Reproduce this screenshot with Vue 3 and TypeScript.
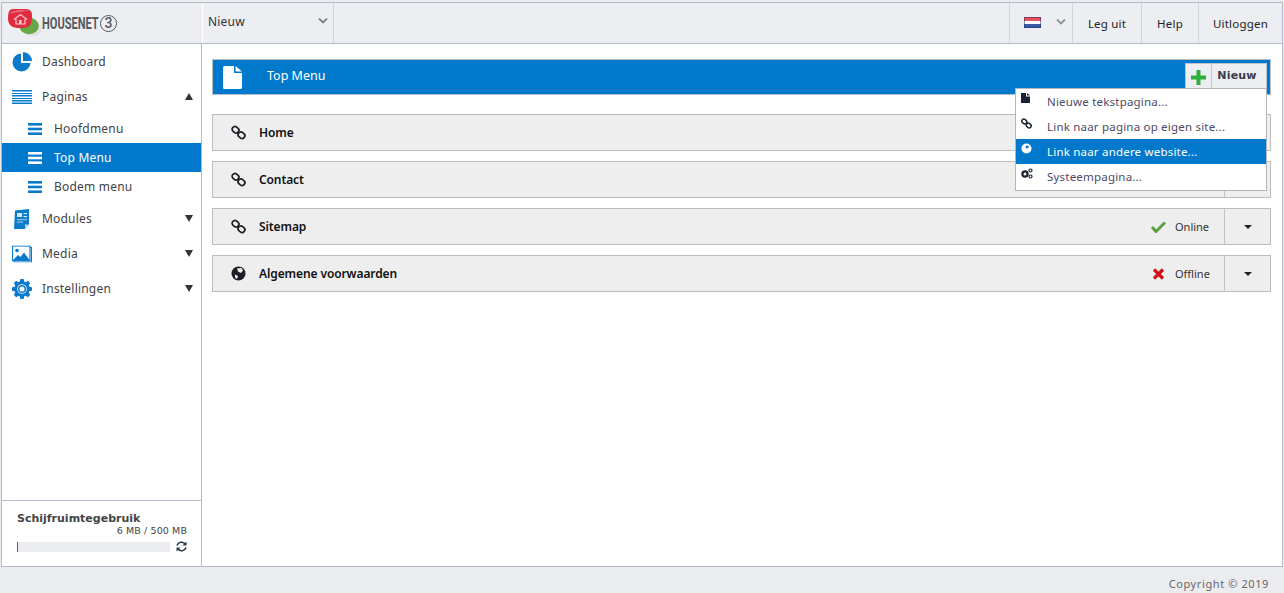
<script setup lang="ts">
interface Row { name: string; icon: 'link' | 'globe'; status: 'Online' | 'Offline'; covered: boolean }
// The first two rows' status lies under the open "Nieuw" menu.
const rows: Row[] = [
  { name: 'Home', icon: 'link', status: 'Online', covered: true },
  { name: 'Contact', icon: 'link', status: 'Online', covered: true },
  { name: 'Sitemap', icon: 'link', status: 'Online', covered: false },
  { name: 'Algemene voorwaarden', icon: 'globe', status: 'Offline', covered: false },
]
const subs = [
  { name: 'Hoofdmenu', active: false },
  { name: 'Top Menu', active: true },
  { name: 'Bodem menu', active: false },
]
</script>

<template>
  <div class="page">
    <div class="frame">
      <header class="topbar">
        <div class="logo">
          <svg class="logo-mark" width="34" height="28" viewBox="0 0 34 28">
            <ellipse cx="24.500" cy="19.500" rx="9" ry="8" fill="#e2e2e4" />
            <ellipse cx="21" cy="17" rx="9.800" ry="8.300" fill="#66a644" />
            <path d="M5 0h12c5 0 7 2 7 7 0 6-1 9-3.500 10.500-3 1.500-9 2-14 1C2 17.500 0 14 0 9 0 3 1.500 0 5 0z" fill="#e02c3e" />
            <path d="M2 4.500C5 1 14 .5 21 2c-7 0-14 1-19 2.500z" fill="#f0808a" />
            <path d="M6 10.500 12.500 5.500l6.500 5M8 10v5h9v-5" fill="none" stroke="#f7c8cc" stroke-width="1.200" />
            <rect x="11" y="11" width="2.600" height="4" fill="#f7c8cc" />
          </svg>
          <span class="logo-text">HOUSENET</span>
          <span class="logo-num">3</span>
        </div>
        <div class="select-cell">
          <span>Nieuw</span>
          <svg width="10" height="6" viewBox="0 0 10 6"><path d="M1 .500l4 4 4-4" fill="none" stroke="#7b7f87" stroke-width="1.800" /></svg>
        </div>
        <div class="top-spacer"></div>
        <div class="top-cell flag-cell">
          <svg width="17" height="11" viewBox="0 0 17 11">
            <rect width="17" height="11" fill="#1c2a5e" />
            <rect x=".5" y=".5" width="16" height="3.500" fill="#e8505e" />
            <rect x=".5" y="4" width="16" height="3" fill="#fff" />
            <rect x=".5" y="7" width="16" height="3.500" fill="#3a5aa8" />
          </svg>
          <svg width="10" height="6" viewBox="0 0 10 6"><path d="M1 .500l4 4 4-4" fill="none" stroke="#8b8f97" stroke-width="1.800" /></svg>
        </div>
        <div class="top-cell leg">Leg uit</div>
        <div class="top-cell help">Help</div>
        <div class="top-cell logout">Uitloggen</div>
      </header>

      <div class="body-row">
        <aside class="sidebar">
          <nav class="nav">
            <div class="nav-item">
              <svg class="nav-icon" width="20" height="20" viewBox="0 0 20 20">
                <path d="M9 1.500A9 9 0 1 0 18.500 11H9z" fill="#0a7acb" />
                <path d="M11 0a9 9 0 0 1 9 9h-9z" fill="#0a7acb" />
              </svg>
              <span>Dashboard</span>
            </div>
            <div class="nav-item">
              <svg class="nav-icon" width="20" height="14" viewBox="0 0 20 14">
                <g fill="#0a7acb">
                  <rect y="0" width="20" height="1.500" /><rect y="3" width="20" height="1" /><rect y="5" width="20" height="1.500" />
                  <rect y="8" width="20" height="1" /><rect y="10" width="20" height="1.500" /><rect y="12.500" width="20" height="1.500" />
                </g>
              </svg>
              <span>Paginas</span>
              <span class="tri up"></span>
            </div>
            <div v-for="s in subs" :key="s.name" class="sub-item" :class="{ active: s.active }">
              <svg width="14" height="12" viewBox="0 0 14 12">
                <g fill="currentColor"><rect width="14" height="2.600" /><rect y="4.700" width="14" height="2.600" /><rect y="9.400" width="14" height="2.600" /></g>
              </svg>
              <span>{{ s.name }}</span>
            </div>
            <div class="nav-item">
              <svg class="nav-icon" width="20" height="20" viewBox="0 0 20 20">
                <path d="M3 1.500L17 0v15.500L13 20H2z" fill="#0a7acb" />
                <path d="M13 20l4-4.500h-4z" fill="#bcd9f0" />
                <rect x="5" y="4" width="5" height="4" fill="#d5e8f7" />
                <rect x="11.500" y="4" width="3.500" height="1.200" fill="#d5e8f7" /><rect x="11.500" y="7" width="3.500" height="1.200" fill="#d5e8f7" />
                <rect x="5" y="10" width="10" height="1.200" fill="#8fc2e8" /><rect x="5" y="12.500" width="6" height="1.200" fill="#8fc2e8" />
              </svg>
              <span>Modules</span>
              <span class="tri"></span>
            </div>
            <div class="nav-item">
              <svg class="nav-icon" width="20" height="17" viewBox="0 0 20 17">
                <rect x="2" y="2" width="17.500" height="14.500" fill="none" stroke="#0a7acb" />
                <rect x=".5" y=".5" width="17.500" height="14.500" fill="#fff" stroke="#0a7acb" stroke-width="1.200" />
                <path d="M1 14.500l5-5 2.500 2 3.500-4.500 5.500 7.500z" fill="#0a7acb" />
                <circle cx="5" cy="5" r="1.800" fill="#0a7acb" />
              </svg>
              <span>Media</span>
              <span class="tri"></span>
            </div>
            <div class="nav-item">
              <svg class="nav-icon" width="20" height="20" viewBox="0 0 20 20">
                <circle cx="10" cy="10" r="7.800" fill="#0a7acb" />
                <g fill="#0a7acb">
                  <rect x="8" y="0" width="4" height="4" rx="1" /><rect x="8" y="16" width="4" height="4" rx="1" />
                  <rect x="0" y="8" width="4" height="4" rx="1" /><rect x="16" y="8" width="4" height="4" rx="1" />
                  <rect x="8" y="0" width="4" height="4" rx="1" transform="rotate(45 10 10)" /><rect x="8" y="16" width="4" height="4" rx="1" transform="rotate(45 10 10)" />
                  <rect x="0" y="8" width="4" height="4" rx="1" transform="rotate(45 10 10)" /><rect x="16" y="8" width="4" height="4" rx="1" transform="rotate(45 10 10)" />
                </g>
                <circle cx="10" cy="10" r="4.800" fill="#fff" />
                <circle cx="10" cy="10" r="3.300" fill="none" stroke="#0a7acb" stroke-width="1.500" />
              </svg>
              <span>Instellingen</span>
              <span class="tri"></span>
            </div>
          </nav>
          <div class="disk">
            <div class="disk-title">Schijfruimtegebruik</div>
            <div class="disk-size">6 MB / 500 MB</div>
            <div class="disk-row">
              <div class="disk-bar"><div class="disk-fill"></div></div>
              <svg width="11" height="11" viewBox="0 0 11 11">
                <path d="M1 4.500A4.600 4.600 0 0 1 9 3" fill="none" stroke="#2b3a4a" stroke-width="1.600" />
                <path d="M10.500.5v4h-4z" fill="#2b3a4a" />
                <path d="M10 6.500A4.600 4.600 0 0 1 2 8" fill="none" stroke="#2b3a4a" stroke-width="1.600" />
                <path d="M.5 10.500v-4h4z" fill="#2b3a4a" />
              </svg>
            </div>
          </div>
        </aside>

        <main class="content">
          <div class="title-bar">
            <svg class="title-icon" width="19" height="23" viewBox="0 0 19 23">
              <path d="M1.500 0H11v7h8v14.500a1.500 1.500 0 0 1-1.500 1.500h-16A1.500 1.500 0 0 1 0 21.500v-20A1.500 1.500 0 0 1 1.500 0z" fill="#fff" />
              <path d="M12.500 0L19 5.500h-6.500z" fill="#fff" />
            </svg>
            <span class="title-text">Top Menu</span>
            <div class="new-wrap">
              <div class="new-btn">
                <span class="new-plus">
                  <svg width="15" height="15" viewBox="0 0 15 15">
                    <path d="M5.500 0h4v5.500H15v4H9.500V15h-4V9.500H0v-4h5.500z" fill="#2fae3e" />
                  </svg>
                </span>
                <span class="new-label">Nieuw</span>
              </div>
              <ul class="menu">
                <li>
                  <svg width="9" height="10" viewBox="0 0 9 10"><path d="M0 0h5v3.500h4V10H0zM6 0l3 2.500H6z" fill="#1c2233" /></svg>
                  <span>Nieuwe tekstpagina...</span>
                </li>
                <li>
                  <svg width="11" height="11" viewBox="0 0 15 15"><g fill="none" stroke="#1c2233" stroke-width="2"><rect x="1" y="2" width="7" height="5.500" rx="2.700" transform="rotate(40 4.500 4.750)" /><rect x="7" y="7.500" width="7" height="5.500" rx="2.700" transform="rotate(40 10.500 10.250)" /></g></svg>
                  <span>Link naar pagina op eigen site...</span>
                </li>
                <li class="hot">
                  <svg width="11" height="11" viewBox="0 0 11 11"><circle cx="5.500" cy="5.500" r="5" fill="#fff" /><path d="M5 2.500l3 .5-1 2.500-2.500-.5z" fill="#0a7acb" /></svg>
                  <span>Link naar andere website...</span>
                </li>
                <li>
                  <svg width="12" height="11" viewBox="0 0 12 11"><circle cx="4" cy="6" r="2.600" fill="none" stroke="#1c2233" stroke-width="2.200" /><circle cx="9.500" cy="2.500" r="1.500" fill="none" stroke="#1c2233" stroke-width="1.200" /><circle cx="9.500" cy="8.500" r="1.500" fill="none" stroke="#1c2233" stroke-width="1.200" /></svg>
                  <span>Systeempagina...</span>
                </li>
              </ul>
            </div>
          </div>

          <div class="rows">
            <div v-for="r in rows" :key="r.name" class="row">
              <svg v-if="r.icon === 'link'" class="row-icon" width="15" height="15" viewBox="0 0 15 15">
                <g fill="none" stroke="#1c2026" stroke-width="1.800"><rect x="1" y="2" width="7" height="5.500" rx="2.700" transform="rotate(40 4.500 4.750)" /><rect x="7" y="7.500" width="7" height="5.500" rx="2.700" transform="rotate(40 10.500 10.250)" /></g>
              </svg>
              <svg v-else class="row-icon" width="15" height="15" viewBox="0 0 15 15">
                <circle cx="7.500" cy="7.500" r="7" fill="#1c2026" />
                <path d="M6 2.500l4.500-.5 1.500 2.500-2 2.500-3-1.500zM4 8.500l3 1.500-1 3-2-1.500z" fill="#eee" />
              </svg>
              <span class="row-name">{{ r.name }}</span>
              <span v-if="!r.covered" class="row-status">
                <svg v-if="r.status === 'Online'" width="15" height="12" viewBox="0 0 15 12"><path d="M1 6l4 4.500L14 1.500" fill="none" stroke="#5f9e3c" stroke-width="3" /></svg>
                <svg v-else width="12" height="12" viewBox="0 0 12 12"><path d="M1.500 1.500l9 9M10.500 1.500l-9 9" stroke="#d40f14" stroke-width="3.200" /></svg>
                <span class="status-text">{{ r.status }}</span>
              </span>
              <span class="row-action"><span class="caret"></span></span>
            </div>
          </div>
        </main>
      </div>
    </div>
    <footer class="footer">Copyright © 2019</footer>
  </div>
</template>

<style>
html, body { margin: 0; background: #ebecf0; }
</style>

<style scoped>
.page {
  width: 1284px;
  height: 593px;
  padding-top: 2px;
  box-sizing: border-box;
  background: #ebecf0;
  font-family: "Noto Sans", sans-serif;
  color: #333;
  overflow: hidden;
}
.frame {
  margin: 0 1px 0 1px;
  height: 565px;
  box-sizing: border-box;
  border: 1px solid #b2b9c9;
  display: flex;
  flex-direction: column;
  background: #fff;
}
.topbar {
  height: 41px;
  flex: none;
  display: flex;
  box-sizing: border-box;
  background: #eceef2;
  border-bottom: 1px solid #b2b9c9;
  font-size: 11.500px;
  color: #222;
}
.logo {
  width: 201px;
  flex: none;
  box-sizing: border-box;
  padding-left: 6px;
  display: flex;
  align-items: center;
  border-right: 1px solid #fff;
}
.logo-mark { flex: none; }
.logo-text {
  display: inline-block;
  width: 54px;
  flex: none;
  font-family: "Roboto", sans-serif;
  font-weight: bold;
  font-size: 17px;
  white-space: nowrap;
  transform: scaleX(0.65);
  transform-origin: left center;
  color: #555a60;
}
.logo-num {
  margin-left: 4px;
  width: 15px;
  height: 15px;
  border: 1.500px solid #555a60;
  border-radius: 50%;
  display: flex;
  align-items: center;
  justify-content: center;
  font-family: "Roboto", sans-serif;
  font-size: 14px;
  font-weight: 500;
  color: #555a60;
}
.select-cell {
  width: 131px;
  flex: none;
  box-sizing: border-box;
  padding: 0 5px 4px 5px;
  display: flex;
  align-items: center;
  justify-content: space-between;
  border-right: 1px solid #d0d3da;
  font-size: 12px;
  letter-spacing: 0.2px;
  color: #333;
}
.top-spacer { flex: 1; }
.top-cell {
  display: flex;
  align-items: center;
  justify-content: center;
  box-sizing: border-box;
  border-left: 1px solid #d0d3da;
  letter-spacing: 0.2px;
}
.flag-cell { width: 63px; padding-bottom: 2px; justify-content: flex-start; padding-left: 14px; gap: 15px; }
.leg { width: 69px; }
.help { width: 57px; }
.logout { width: 84px; }

.body-row { flex: 1; display: flex; min-height: 0; }
.sidebar {
  width: 200px;
  flex: none;
  box-sizing: border-box;
  border-right: 1px solid #b2b9c9;
  display: flex;
  flex-direction: column;
  justify-content: space-between;
}
.nav { font-size: 12px; letter-spacing: 0.2px; color: #3f4247; }
.nav-item {
  height: 35px;
  position: relative;
  display: flex;
  align-items: center;
  padding-left: 40px;
}
.nav-icon { position: absolute; left: 10px; top: 50%; transform: translateY(-50%); }
.tri {
  position: absolute;
  right: 8px;
  top: 14px;
  border-left: 4.500px solid transparent;
  border-right: 4.500px solid transparent;
  border-top: 7px solid #333;
}
.tri.up { border-top: 0; border-bottom: 7px solid #333; }
.sub-item {
  height: 29px;
  display: flex;
  align-items: center;
  padding-left: 26px;
  gap: 12px;
  color: #3f4247;
}
.sub-item svg { color: #0a7acb; }
.sub-item.active { background: #0079cc; color: #fff; }
.sub-item.active svg { color: #fff; }

.disk {
  height: 66px;
  box-sizing: border-box;
  border-top: 1px solid #b2b9c9;
  padding: 11px 14px 0 15px;
  font-family: "DejaVu Sans", sans-serif;
  color: #444;
}
.disk-title { font-size: 11px; font-weight: bold; line-height: 13px; }
.disk-size { font-size: 9.500px; text-align: right; line-height: 12px; letter-spacing: 0.1px; }
.disk-row { display: flex; align-items: center; justify-content: space-between; margin-top: 4px; }
.disk-bar { width: 153px; height: 10px; background: #ebecf0; }
.disk-fill { width: 1px; height: 100%; background: #0a70b8; }

.content { flex: 1; padding: 15px 11px 0 10px; min-width: 0; }
.title-bar {
  height: 36px;
  box-sizing: border-box;
  background: #0079cc;
  border: 1px solid #b9bfc9;
  display: flex;
  align-items: center;
  position: relative;
  color: #fff;
}
.title-icon { margin-left: 10px; flex: none; }
.title-text { margin-left: 25px; margin-bottom: 3px; font-size: 12.500px; letter-spacing: 0; }
.new-wrap { position: absolute; right: 3px; top: 3px; }
.new-btn {
  width: 82px;
  height: 26px;
  box-sizing: border-box;
  display: flex;
  background: #eceef2;
  border: 1px solid #bfc3ca;
  border-bottom: 0;
}
.new-plus {
  width: 26px;
  display: flex;
  align-items: center;
  justify-content: center;
  border-right: 1px solid #c4c7cd;
  padding-top: 2px;
  box-sizing: border-box;
}
.new-label {
  flex: 1;
  text-align: center;
  padding-right: 4px;
  font-family: "DejaVu Sans", sans-serif;
  font-size: 11px;
  font-weight: bold;
  letter-spacing: 0.2px;
  line-height: 23px;
  color: #3b3b4a;
}
.menu {
  list-style: none;
  margin: 0;
  padding: 0 0 1px;
  position: absolute;
  top: 25px;
  right: 0;
  width: 252px;
  box-sizing: border-box;
  background: #fff;
  border: 1px solid #b2b5bb;
  z-index: 2;
  font-size: 11.500px;
  letter-spacing: 0.2px;
  color: #4d4a66;
}
.menu li {
  height: 25px;
  display: flex;
  align-items: center;
  position: relative;
  padding-left: 31px;
}
.menu li svg { position: absolute; left: 5px; top: 4px; }
.menu li.hot { background: #0079cc; color: #fff; }

.rows { display: flex; flex-direction: column; gap: 10px; margin-top: 19px; }
.row {
  height: 37px;
  box-sizing: border-box;
  background: #eeeeee;
  border: 1px solid #bcbcbc;
  display: flex;
  align-items: center;
  color: #111;
}
.row-icon { margin-left: 18px; flex: none; }
.row-name { margin-left: 13px; font-size: 12px; font-weight: 600; letter-spacing: -0.1px; flex: 1; }
.row-status { display: flex; align-items: center; font-size: 11px; color: #333; }
.status-text { width: 49px; margin-left: 9px; }
.row-status svg { width: 15px; }
.row-action {
  width: 46px;
  box-sizing: border-box;
  height: 100%;
  display: flex;
  align-items: center;
  justify-content: center;
  border-left: 1px solid #bcc2c8;
}
.caret {
  border-left: 4px solid transparent;
  border-right: 4px solid transparent;
  border-top: 4px solid #222;
}
.footer {
  height: 26px;
  box-sizing: border-box;
  padding: 9px 15px 0 0;
  text-align: right;
  font-size: 11px;
  letter-spacing: 0.6px;
  line-height: 16px;
  color: #666;
}
</style>
